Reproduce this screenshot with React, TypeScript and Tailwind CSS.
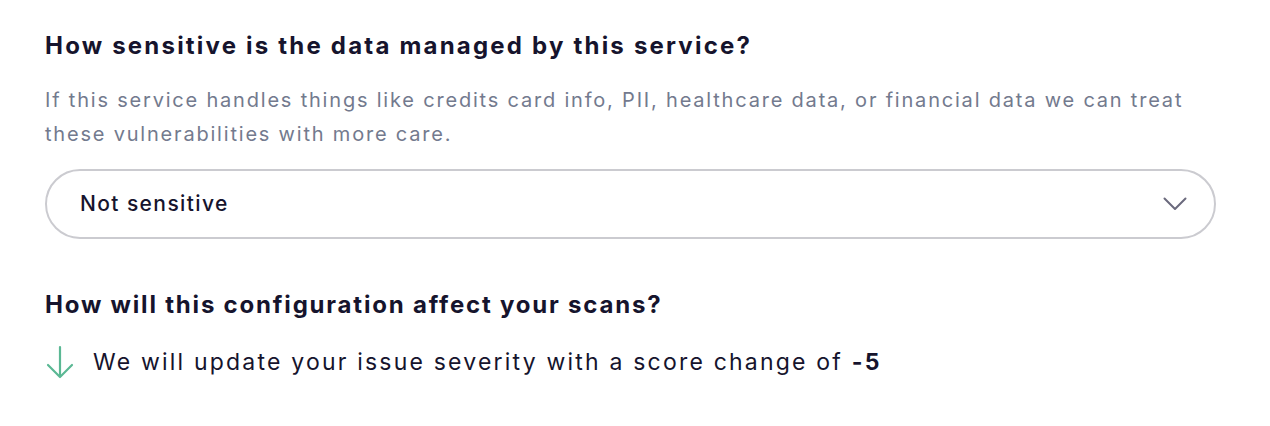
export default function App() {
  return (
    <div className="min-h-screen bg-white px-[45px] pt-[30px] font-['Inter',sans-serif] text-[#16142d]">
      <h2 className="text-[24px] font-bold leading-[32px] tracking-[2.2px]">
        How sensitive is the data managed by this service?
      </h2>
      <p className="mt-[21px] max-w-[1171px] text-[20px] leading-[34px] tracking-[1.8px] text-[#737a8e]">
        If this service handles things like credits card info, PII, healthcare data, or financial data we can treat
        these vulnerabilities with more care.
      </p>

      {/* sensitivity select */}
      <button className="mt-[18px] flex h-[70px] w-[1171px] items-center justify-between rounded-full border-2 border-[#cbcbd0] bg-white pl-[33px] pr-[27px] text-left">
        <span className="text-[21px] font-medium tracking-[1.4px]">Not sensitive</span>
        <svg width="24" height="14" viewBox="0 0 24 14" fill="none" stroke="#6b6a7d" strokeWidth="2" strokeLinecap="round" strokeLinejoin="round">
          <path d="M1.5 1.5l10.5 10.5 10.5-10.5" />
        </svg>
      </button>

      <h2 className="mt-[50px] text-[24px] font-bold leading-[32px] tracking-[1.8px]">
        How will this configuration affect your scans?
      </h2>
      <div className="mt-[24px] flex items-center gap-[18px]">
        <svg width="30" height="34" viewBox="0 0 30 34" fill="none" stroke="#5bb894" strokeWidth="2.2" strokeLinecap="round" strokeLinejoin="round">
          <path d="M15 2v29" />
          <path d="M3 20l12 12 12-12" />
        </svg>
        <p className="text-[23px] leading-[34px] tracking-[2.2px]">
          We will update your issue severity with a score change of <span className="font-bold">-5</span>
        </p>
      </div>
    </div>
  );
}
